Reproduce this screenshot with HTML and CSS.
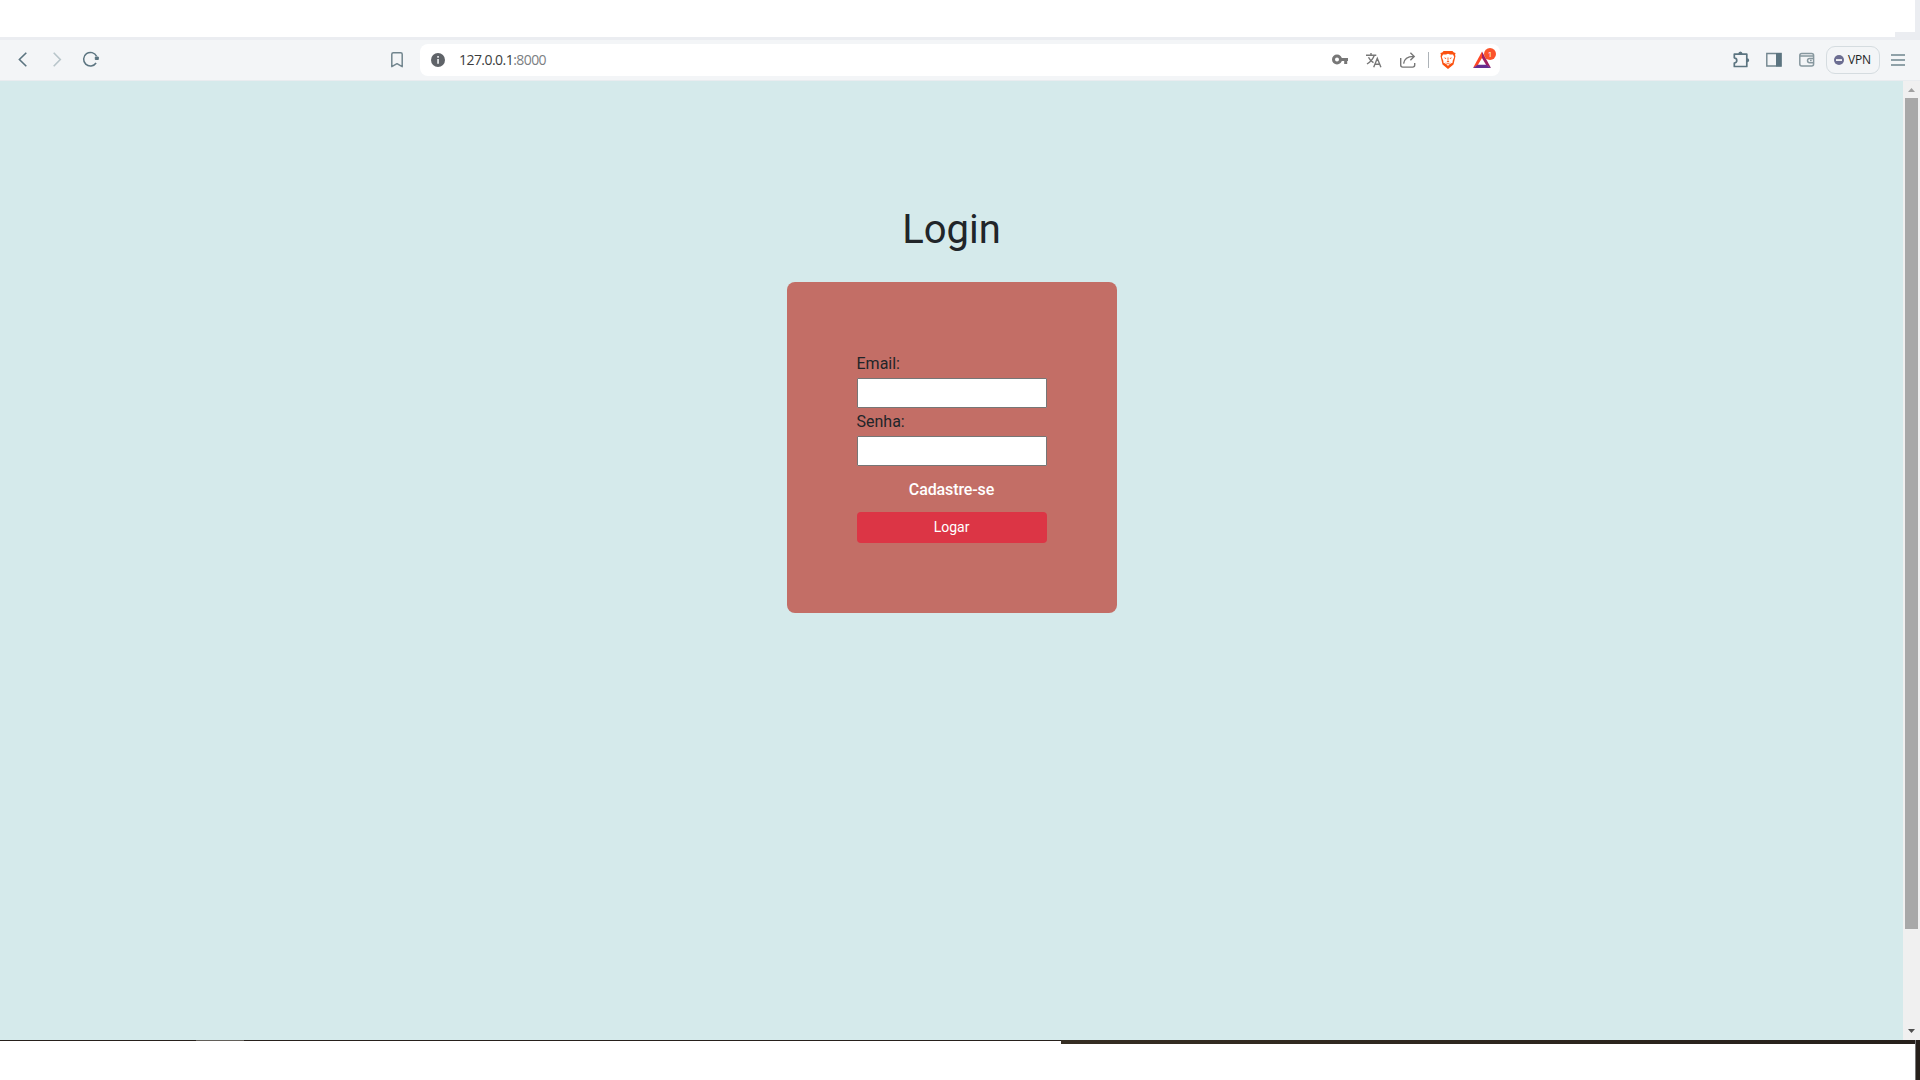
FILE: index.html
```html
<!DOCTYPE html>
<html lang="pt-BR">
<head>
<meta charset="utf-8">
<title>Login</title>
<link rel="stylesheet" href="styles.css">
</head>
<body>
<div class="tabstrip"><div class="tabs"></div><div class="tabs-base"></div></div>
<header class="toolbar">
  <nav class="nav">
    <svg width="20" height="20" fill="none" stroke="#5b7480" stroke-width="1.6"><path d="M13.3 2.7 6.4 9.5l6.9 6.8"/></svg>
    <svg width="20" height="20" fill="none" stroke="#b8c5ca" stroke-width="1.6"><path d="M6.7 2.7 13.3 9.5l-6.6 6.8"/></svg>
    <svg width="20" height="20" fill="none" stroke="#5b7480" stroke-width="1.5"><path d="M15.6 6.3A6.8 6.8 0 1 0 15.1 13"/><path d="M14.3 7h3v2.5h-3z" fill="#5b7480" stroke-linejoin="round" stroke-width="1"/></svg>
  </nav>
  <svg class="bookmark" width="14" height="18" fill="none" stroke="#71858e" stroke-width="1.5"><path d="M1.8 15.7V3.2q0-1.5 1.5-1.5h7.4q1.5 0 1.5 1.5v12.5L7 12.7z" stroke-linejoin="round"/></svg>
  <div class="address">
    <svg width="14" height="14"><circle cx="7" cy="7" r="7" fill="#5f6368"/><path d="M6.2 3h1.7v1.7H6.2zM6.2 6h1.7v4.8H6.2z" fill="#e8eaed"/></svg>
    <span class="url">127.0.0.1<span class="port">:8000</span></span>
    <div class="address-icons">
      <svg width="18" height="18" fill="none" stroke="#777"><circle cx="6" cy="8.5" r="3.5" stroke-width="3"/><path d="M10 8.6h7M14.7 9v4" stroke-width="3"/></svg>
      <svg width="18" height="18" fill="none" stroke="#777" stroke-width="1.4"><path d="M1 4.2h10.3M6 2v2M9.2 4.5C8 8 5.5 10.8 2 13M3.5 6.2c1 2.2 3 4.3 5 5.5M8.7 16.3l3.6-9 3.6 9M10 13.3h4.7"/></svg>
      <svg width="18" height="18" fill="none" stroke="#777" stroke-width="1.4"><path d="M1.7 7v7q0 2.1 2 2.1h10q2 0 2-2.1v-2M4.6 12.7C5.3 7.8 8.5 5.4 14.3 5.4M11.4 1.7 15.2 5.4l-3.8 3.8"/></svg>
      <i class="divider"></i>
      <svg class="brave" width="18" height="20"><path d="M4.6 1h8.8l1.5 1.6 1.7.5-.6 2 .5 1-2 8.5L9 19l-5.5-4.4L1.5 6l.5-1-.6-2 1.8-.4z" fill="#fb5110"/><path d="m4 4.4 3 .1 2-.7 2 .7 3-.1 1.2 2.6-1.6 4 .1 1.6-3.2 1.6L9 16l-1.5-1.8-3.2-1.6.1-1.6L2.8 7z" fill="#fff"/><path d="m4.6 7.5 2.8.5-.6 1zM13.4 7.5l-2.8.5.6 1zM8.5 7.5h1l-.2 3.4 1.2.7-1.5.9-1.5-.9 1.2-.7zM6 12.2l3 1.3 3-1.3-3 2.2z" fill="#fb5110"/></svg>
      <span class="rewards">
        <svg width="20" height="18"><path d="M10 .5 1 17l4.7-2.8L10 7z" fill="#ff4724"/><path d="M10 .5V7l4.3 7.2L19 17z" fill="#9e1f63"/><path d="m1 17 4.7-3.2h8.6L19 17z" fill="#662d91"/></svg>
        <b class="badge">1</b>
      </span>
    </div>
  </div>
  <div class="actions">
    <svg width="20" height="20" fill="none" stroke="#5b7480" stroke-width="1.7"><path d="M3.3 4.2h12.5v12.3H3.3V13c3.3-.5 3.3-4.7 0-5.2z" stroke-linejoin="round"/><path d="M7.3 4q0-2.5 2.1-2.5T11.5 4zM16 8.3q2.2 0 2.2 2t-2.2 2z" fill="#5b7480" stroke="none"/></svg>
    <svg width="20" height="20" fill="none" stroke="#71858e" stroke-width="1.4"><path d="M2.8 3.5h14.3V16H2.8z"/><path d="M12 3h5.5v13.5H12z" fill="#5b7480" stroke="none"/></svg>
    <svg width="20" height="20" fill="none" stroke="#87989f" stroke-width="1.5"><rect x="2.8" y="3.5" width="13.8" height="12.6" rx="2"/><path d="M3 6.1h13.5M17 8.4h-4.3q-2.2 0-2.2 2.2t2.2 2.2H17M13 10.6h1.7"/></svg>
  </div>
  <div class="vpn"><svg width="10" height="10"><circle cx="5" cy="5" r="5" fill="#6b6d91"/><path d="M2 4.2h6v1.7H2z" fill="#fff"/></svg><span>VPN</span></div>
  <svg class="menu" width="14" height="12" stroke="#6f858e" stroke-width="1.5"><path d="M0 1h14M0 6h14M0 11h14"/></svg>
</header>
<div class="viewport">
  <main class="page">
    <h1>Login</h1>
    <form class="card">
      <label for="email">Email:</label>
      <input id="email" type="text">
      <label for="senha">Senha:</label>
      <input id="senha" type="password">
      <a class="signup">Cadastre-se</a>
      <button type="button">Logar</button>
    </form>
  </main>
  <aside class="scrollbar">
    <svg width="17" height="17"><path d="M5 11h7L8.5 7z" fill="#a0a0a0"/></svg>
    <div class="thumb"></div>
    <svg class="down" width="17" height="17"><path d="M5 6h7L8.5 10z" fill="#505050"/></svg>
  </aside>
</div>
<footer class="desktop"><div class="edge"><i></i><i></i><i></i></div><div class="lower"></div></footer>
</body>
</html>
```

FILE: styles.css
```css
* { box-sizing: border-box; }
body { margin: 0; width: 1920px; height: 1080px; overflow: hidden; display: flex; flex-direction: column; background: #fff; font-family: Roboto, sans-serif; color: #212529; }
svg { display: block; flex: none; }
.tabstrip { height: 40px; flex: none; background: #ebedf1; }
.tabs { width: 1915px; height: 32px; background: #fff; }
.tabs-base { width: 1895px; height: 5px; background: #fff; }
.toolbar { height: 41px; flex: none; display: flex; align-items: center; background: #f3f5f7; border-bottom: 1px solid #e9ecef; font-family: "Open Sans", sans-serif; }
.nav { display: flex; gap: 14px; margin-left: 13px; }
.bookmark { margin-left: 289px; }
.address { display: flex; align-items: center; width: 1080px; height: 32px; margin-left: 16px; padding: 0 8px 0 11px; border-radius: 8px; background: #fff; }
.url { margin-left: 14px; padding-bottom: 1px; font-size: 14px; letter-spacing: -0.55px; color: #3b3d40; }
.port { color: #7b7e82; }
.address-icons { display: flex; align-items: center; margin-left: auto; gap: 16px; }
.divider { width: 1px; height: 16px; margin: 0 -6px 0 -5px; background: #adb3b8; }
.rewards { position: relative; margin-left: -1px; }
.badge { position: absolute; left: 12px; top: -3px; width: 12px; height: 12px; border-radius: 50%; background: #fb542b; color: #fff; font-size: 8px; font-weight: 400; line-height: 12px; text-align: center; }
.actions { display: flex; gap: 13px; margin-left: 231px; }
.vpn { display: flex; align-items: center; width: 54px; height: 28px; margin-left: 9px; padding-left: 7px; gap: 4px; border: 1px solid #d5dce0; border-radius: 9px; font-size: 12px; letter-spacing: -0.2px; color: #1d1f25; }
.vpn span { padding-bottom: 1px; }
.menu { margin-left: 11px; }
.viewport { display: flex; height: 959px; flex: none; }
.page { flex: 1; display: flex; flex-direction: column; align-items: center; background: #d5eaeb; }
h1 { margin: 125px 0 28px; font-size: 40px; font-weight: 400; line-height: 48px; }
.card { display: flex; flex-direction: column; width: 330px; height: 331px; padding: 68px 70px 70px; border-radius: 8px; background: #c36e66; font-size: 16px; }
label { height: 28px; line-height: 27px; }
input { height: 30px; border: 1px solid #767676; border-radius: 1px; background: #fff; outline: none; }
.signup { height: 46px; line-height: 47px; text-align: center; font-weight: 500; letter-spacing: -0.12px; color: #fff; }
button { height: 31px; padding: 0; border: 0; border-radius: 4px; background: #dc3545; color: #fff; font: 400 14px/31px Roboto, sans-serif; }
.scrollbar { display: flex; flex-direction: column; width: 17px; background: #f0f0f0; }
.thumb { width: 13px; height: 831px; margin-left: 2px; background: #a8a8a8; }
.down { margin-top: auto; }
.desktop { flex: 1; display: flex; flex-direction: column; }
.edge { display: grid; grid-template-columns: 1061px 854px 5px; height: 4px; }
.edge i { background: #26201b; }
.edge i:first-child { height: 1px; background: linear-gradient(90deg, #26201b 196px, #625f59 196px 244px, #26201b 244px); }
.edge i:nth-child(2) { background: linear-gradient(90deg, #352d22, #26201b); }
.edge i:last-child { border-left: 1px solid #777; }
.lower { flex: 1; width: 1920px; border-right: 4px solid #26201b; background: linear-gradient(90deg, #fff 1915px, #777 1915px); }
```
